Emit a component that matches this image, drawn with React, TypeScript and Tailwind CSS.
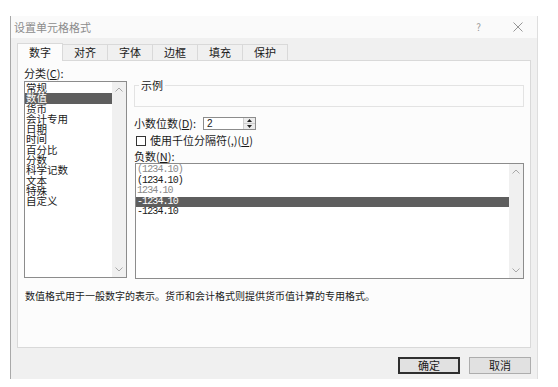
import React from 'react';

const categories = ['常规', '数值', '货币', '会计专用', '日期', '时间', '百分比', '分数', '科学记数', '文本', '特殊', '自定义'];

const negatives = [
  { text: '(1234.10)', tone: 'text-[#8a8a8a]' },
  { text: '(1234.10)', tone: 'text-[#1a1a1a]' },
  { text: '1234.10', tone: 'text-[#8a8a8a]' },
  { text: '-1234.10', tone: 'text-white', selected: true },
  { text: '-1234.10', tone: 'text-[#1a1a1a]' },
];

const tabs = ['数字', '对齐', '字体', '边框', '填充', '保护'];

function Chevron({ up }: { up?: boolean }) {
  return (
    <svg width="8" height="5" viewBox="0 0 8 5" className="text-[#a8a8a8]">
      <path d={up ? 'M0.5 4.5 L4 1 L7.5 4.5' : 'M0.5 0.5 L4 4 L7.5 0.5'} fill="none" stroke="currentColor" strokeWidth="1" />
    </svg>
  );
}

export default function App() {
  return (
    <div
      className="w-[558px] h-[387px] bg-white overflow-hidden text-[#1a1a1a]"
      style={{ fontFamily: '"Noto Sans CJK SC", "Liberation Sans", sans-serif' }}
    >
      <div className="ml-[10px] mt-[16px] w-[528px] h-[363px] flex flex-col bg-[#f0f0f0] border-l border-l-[#a9a9a9] border-r border-r-[#dedede]">
        {/* title bar */}
        <div className="h-[22px] bg-[#fafafa] flex items-center text-[11px] leading-none text-[#8c8c8c]">
          <span className="pl-[3px]">设置单元格格式</span>
          <span className="ml-auto mr-[32px] text-[10px] text-[#9a9a9a]">?</span>
          <svg width="10" height="10" viewBox="0 0 10 10" className="mr-[14px]">
            <path d="M0.5 0.5 L9.5 9.5 M9.5 0.5 L0.5 9.5" stroke="#8a8a8a" strokeWidth="0.9" />
          </svg>
        </div>

        {/* tabs */}
        <div className="h-[22px] flex items-end pl-[6px]">
          {tabs.map((t, i) =>
            i === 0 ? (
              <div
                key={t}
                className="w-[46px] h-[18px] -mb-px z-10 bg-[#fcfcfc] border border-b-0 border-[#d9d9d9] flex items-center justify-center text-[11px] leading-none"
              >
                {t}
              </div>
            ) : (
              <div
                key={t}
                className="w-[45px] h-[16px] border-t border-r border-[#d9d9d9] flex items-center justify-center text-[11px] leading-none"
              >
                {t}
              </div>
            )
          )}
        </div>

        {/* panel */}
        <div className="mx-[6px] h-[288px] bg-[#fcfcfc] border border-[#d9d9d9] px-[6px] pt-[6px] text-[11px]">
          <div className="flex gap-[7px]">
            {/* category */}
            <div className="w-[103px]">
              <div className="h-[14px] leading-[13px]">分类(<span className="underline">C</span>):</div>
              <div className="h-[197px] border border-[#8c8c8c] bg-white flex">
                <div className="flex-1 pt-[1px] text-[10.5px]">
                  {categories.map((c, i) => (
                    <div
                      key={c}
                      className={`h-[10.3px] leading-[10.3px] pl-[1px] ${i === 1 ? 'bg-[#5e5e5e] text-white' : ''}`}
                    >
                      {c}
                    </div>
                  ))}
                </div>
                <div className="w-[14px] bg-[#f0f0f0] flex flex-col items-center justify-between py-[5px]">
                  <Chevron up />
                  <Chevron />
                </div>
              </div>
            </div>

            {/* right side */}
            <div className="w-[390px] pt-[12px]">
              <fieldset className="h-[28px] border border-[#e3e3e3]">
                <legend className="ml-[4px] px-[2px] text-[11px] leading-[12px]">示例</legend>
              </fieldset>

              <div className="mt-[10px] h-[13px] flex items-center">
                <span className="w-[69px] leading-none">
                  小数位数(<span className="underline">D</span>):
                </span>
                <div className="w-[53px] h-[13px] border border-[#8c8c8c] bg-white flex items-center">
                  <span className="flex-1 pl-[3px] text-[10px] leading-none" style={{ fontFamily: '"Liberation Sans", sans-serif' }}>2</span>
                  <div className="w-[12px] h-full flex flex-col border-l border-[#cfcfcf] bg-[#ececec]">
                    <div className="flex-1 flex items-center justify-center border-b border-[#cfcfcf]">
                      <svg width="5" height="3" viewBox="0 0 5 3"><path d="M0 3 L2.5 0 L5 3 Z" fill="#222" /></svg>
                    </div>
                    <div className="flex-1 flex items-center justify-center">
                      <svg width="5" height="3" viewBox="0 0 5 3"><path d="M0 0 L2.5 3 L5 0 Z" fill="#222" /></svg>
                    </div>
                  </div>
                </div>
              </div>

              <div className="mt-[5px] h-[11px] flex items-center">
                <div className="ml-[2px] w-[10px] h-[10px] border border-[#333] bg-white" />
                <span className="ml-[4px] leading-none">
                  使用千位分隔符(,)(<span className="underline">U</span>)
                </span>
              </div>

              <div className="mt-[4px] h-[13px] leading-[13px]">负数(<span className="underline">N</span>):</div>
              <div className="ml-px h-[116px] border border-[#8c8c8c] bg-white flex">
                <div className="flex-1 pt-[1px] text-[10px]" style={{ fontFamily: '"Liberation Mono", monospace' }}>
                  {negatives.map((n, i) => (
                    <div
                      key={i}
                      className={`h-[10.5px] leading-[10.5px] pl-[1px] tracking-[-0.9px] ${n.tone} ${n.selected ? 'bg-[#5e5e5e]' : ''}`}
                    >
                      {n.text}
                    </div>
                  ))}
                </div>
                <div className="w-[14px] bg-[#f0f0f0] flex flex-col items-center justify-between py-[5px]">
                  <Chevron up />
                  <Chevron />
                </div>
              </div>
            </div>
          </div>

          <div className="mt-[12px] pl-px text-[10px] leading-none">
            数值格式用于一般数字的表示。货币和会计格式则提供货币值计算的专用格式。
          </div>
        </div>

        {/* footer */}
        <div className="flex-1 flex justify-end items-start pt-[9px] pr-[6px] gap-[9px] text-[11px]">
          <button className="w-[62px] h-[17px] bg-[#e1e1e1] border border-[#2f2f2f] shadow-[inset_0_0_0_1px_#2f2f2f] leading-none">
            确定
          </button>
          <button className="w-[62px] h-[17px] bg-[#e1e1e1] border border-[#adadad] leading-none">取消</button>
        </div>
      </div>
    </div>
  );
}
